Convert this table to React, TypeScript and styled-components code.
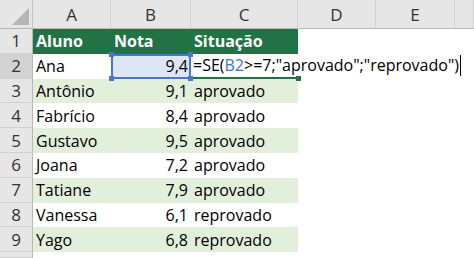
import styled, { createGlobalStyle } from 'styled-components';

const GlobalStyle = createGlobalStyle`
  html, body { margin: 0; padding: 0; background: #fff; overflow: hidden; }
  body { font-family: "Open Sans", "Liberation Sans", sans-serif; }
`;

const COLS = ['A', 'B', 'C', 'D', 'E', ''];

const rows: [string, string, string][] = [
  ['Antônio', '9,1', 'aprovado'],
  ['Fabrício', '8,4', 'aprovado'],
  ['Gustavo', '9,5', 'aprovado'],
  ['Joana', '7,2', 'aprovado'],
  ['Tatiane', '7,9', 'aprovado'],
  ['Vanessa', '6,1', 'reprovado'],
  ['Yago', '6,8', 'reprovado'],
];

const Sheet = styled.div`
  display: grid;
  grid-template-columns: 33px 78px 80px 107px 78px 79px 1fr;
  grid-template-rows: 29px repeat(9, 24.8px) 1fr;
  width: 474px;
  height: 258px;
  font-size: 16px;
  color: #000;
`;

const Corner = styled.div`
  position: relative;
  background: #e6e6e6;
  border-right: 1px solid #c4c4c4;
  border-bottom: 1px solid #b8b8b8;
  &::after {
    content: '';
    position: absolute;
    right: 3px;
    bottom: 3px;
    border-style: solid;
    border-width: 0 0 17px 17px;
    border-color: transparent transparent #b6b6b6 transparent;
  }
`;

const ColHead = styled.div`
  display: flex;
  align-items: flex-end;
  justify-content: center;
  padding-bottom: 2px;
  box-sizing: border-box;
  background: #e6e6e6;
  border-right: 1px solid #d0d0d0;
  border-bottom: 1px solid #b8b8b8;
  color: #333;
  font-size: 17px;
`;

const RowHead = styled.div<{ $active?: boolean }>`
  display: flex;
  align-items: center;
  justify-content: center;
  background: ${({ $active }) => ($active ? '#d2d2d2' : '#e6e6e6')};
  border-right: 1px solid #b8b8b8;
  border-bottom: 1px solid #d0d0d0;
  color: #333;
  font-size: 17px;
`;

const Cell = styled.div<{ $tone?: 'head' | 'stripe' | 'plain'; $right?: boolean }>`
  display: flex;
  align-items: center;
  justify-content: ${({ $right }) => ($right ? 'flex-end' : 'flex-start')};
  padding: 0 3px 0 3px;
  box-sizing: border-box;
  white-space: nowrap;
  background: ${({ $tone }) =>
    $tone === 'head' ? '#217346' : $tone === 'stripe' ? '#e2efda' : 'transparent'};
  color: ${({ $tone }) => ($tone === 'head' ? '#fff' : '#000')};
  font-weight: ${({ $tone }) => ($tone === 'head' ? 700 : 400)};
`;

const PickedCell = styled(Cell)`
  position: relative;
  z-index: 3;
  background: #dce6f4;
  border: 2px solid #4a76c5;
  padding-right: 1px;
`;

const Handle = styled.span<{ $x: 'l' | 'r'; $y: 't' | 'b' }>`
  position: absolute;
  width: 5px;
  height: 5px;
  background: #4a76c5;
  ${({ $x }) => ($x === 'l' ? 'left: -4px;' : 'right: -4px;')}
  ${({ $y }) => ($y === 't' ? 'top: -4px;' : 'bottom: -4px;')}
`;

const EditCell = styled(Cell)`
  position: relative;
  z-index: 2;
  overflow: visible;
  padding-left: 2px;
  border-bottom: 2px solid #217346;
  &::after {
    content: '';
    position: absolute;
    right: -3px;
    bottom: -4px;
    width: 5px;
    height: 5px;
    background: #217346;
  }
`;

const Ref = styled.span`
  color: #4472c4;
`;

const Caret = styled.span`
  display: inline-block;
  width: 0;
  height: 21px;
  margin-left: 1px;
  border-left: 1px solid #000;
  vertical-align: middle;
`;

export default function App() {
  return (
    <>
      <GlobalStyle />
      <Sheet>
        <Corner />
        {COLS.map((c, i) => (
          <ColHead key={i}>{c}</ColHead>
        ))}

        <RowHead>1</RowHead>
        <Cell $tone="head">Aluno</Cell>
        <Cell $tone="head">Nota</Cell>
        <Cell $tone="head">Situação</Cell>
        <Cell />
        <Cell />
        <Cell />

        <RowHead $active>2</RowHead>
        <Cell>Ana</Cell>
        <PickedCell $right>
          9,4
          <Handle $x="l" $y="t" />
          <Handle $x="r" $y="t" />
          <Handle $x="l" $y="b" />
          <Handle $x="r" $y="b" />
        </PickedCell>
        <EditCell>
          <span>
            =SE(<Ref>B2</Ref>&gt;=7;"aprovado";"reprovado")
          </span>
          <Caret />
        </EditCell>
        <Cell />
        <Cell />
        <Cell />

        {rows.map(([name, grade, status], i) => {
          const tone = i % 2 === 0 ? 'stripe' : 'plain';
          return [
            <RowHead key={`h${i}`}>{i + 3}</RowHead>,
            <Cell key={`a${i}`} $tone={tone}>{name}</Cell>,
            <Cell key={`b${i}`} $tone={tone} $right>{grade}</Cell>,
            <Cell key={`c${i}`} $tone={tone}>{status}</Cell>,
            <Cell key={`d${i}`} />,
            <Cell key={`e${i}`} />,
            <Cell key={`f${i}`} />,
          ];
        })}

        <RowHead />
      </Sheet>
    </>
  );
}
